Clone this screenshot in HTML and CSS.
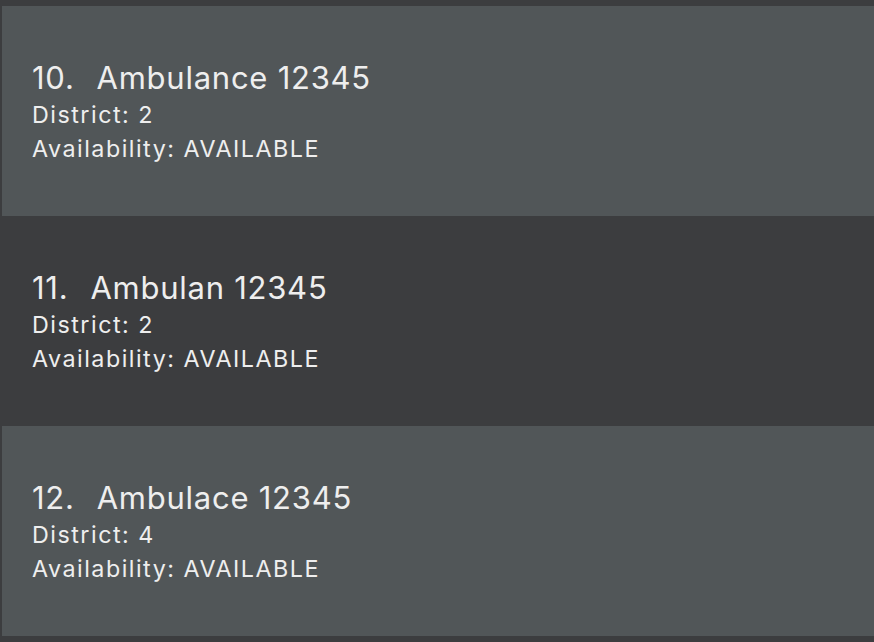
FILE: index.html
```html
<!DOCTYPE html>
<html>
<head>
<meta charset="utf-8">
<link rel="stylesheet" href="styles.css">
</head>
<body>
<div class="list">
  <div class="cell light">
    <div class="card">
      <div class="title"><span class="idx">10.</span><span class="name">Ambulance 12345</span></div>
      <div class="detail">District: 2</div>
      <div class="detail">Availability: AVAILABLE</div>
    </div>
  </div>
  <div class="cell dark">
    <div class="card">
      <div class="title"><span class="idx">11.</span><span class="name">Ambulan 12345</span></div>
      <div class="detail">District: 2</div>
      <div class="detail">Availability: AVAILABLE</div>
    </div>
  </div>
  <div class="cell light">
    <div class="card">
      <div class="title"><span class="idx">12.</span><span class="name">Ambulace 12345</span></div>
      <div class="detail">District: 4</div>
      <div class="detail">Availability: AVAILABLE</div>
    </div>
  </div>
</div>
</body>
</html>
```
FILE: styles.css
```css
html, body {
  margin: 0;
  padding: 0;
  background: #3c3d3f;
}
body {
  width: 874px;
  height: 642px;
  overflow: hidden;
  font-family: Inter, "Noto Sans", sans-serif;
  color: #eeeeee;
}
.list {
  display: flex;
  flex-direction: column;
  padding: 6px 0 6px 2px;
}
.cell {
  box-sizing: border-box;
  height: 210px;
  display: flex;
  align-items: flex-start;
  padding: 55px 0 0 30px;
}
.light { background: #515658; }
.dark { background: #3c3d3f; }
.card {
  display: flex;
  flex-direction: column;
}
.title {
  display: flex;
  gap: 22px;
  font-size: 31px;
  line-height: 34px;
  letter-spacing: 0.75px;
  margin-bottom: 3px;
}
.detail {
  font-size: 23.3px;
  line-height: 34px;
  letter-spacing: 1.5px;
}
```
